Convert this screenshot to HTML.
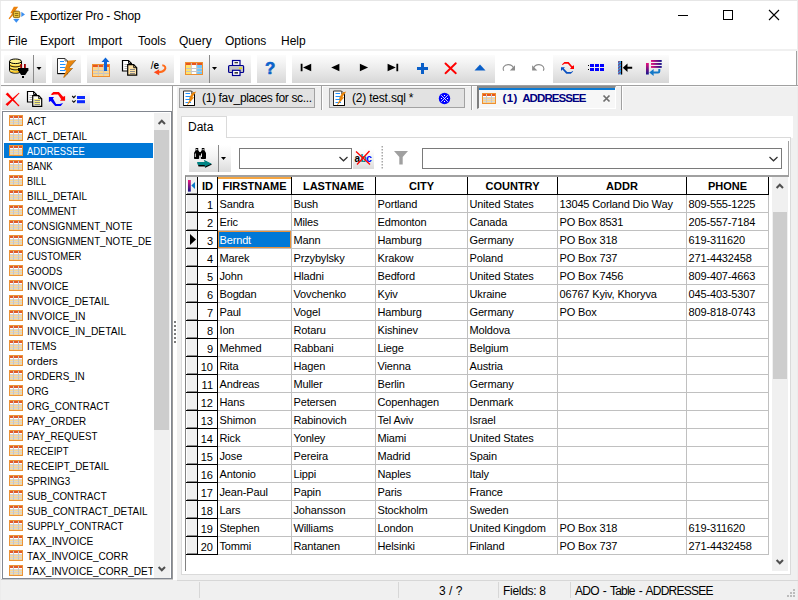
<!DOCTYPE html>
<html lang="en"><head><meta charset="utf-8"><title>Exportizer Pro - Shop</title>
<style>
*{box-sizing:border-box;margin:0;padding:0}
html,body{width:798px;height:600px;overflow:hidden;background:#f0f0f0}
body{position:relative;font-family:"Liberation Sans",sans-serif;font-size:12px;color:#000}
.a{position:absolute}
.t{position:absolute;white-space:nowrap;line-height:16px;height:16px}
.seg{font-size:12px}
.tah{font-size:11px}
.sx{display:inline-block;transform-origin:0 50%}
.grp{position:absolute;top:55px;height:28px;background:linear-gradient(#fcfcfc 0%,#f4f4f4 25%,#e9e9e9 55%,#d7d7d7 100%)}
.vsep{position:absolute;width:1px;background:#8a8a8a}
svg{position:absolute;overflow:visible}
.li{position:absolute;left:4px;width:149px;height:15px;overflow:hidden}
.li .tx{position:absolute;left:23px;top:1px;line-height:15px;font-size:11px;white-space:nowrap;transform-origin:0 50%}
.hl{background:#0078d7;color:#fff}
.cell{position:absolute;height:17px;padding-top:1px;line-height:17px;font-size:11px;letter-spacing:-.15px;white-space:nowrap;overflow:hidden}
.hd{font-weight:bold;text-align:center;letter-spacing:0}
</style></head>
<body>
<div class="a" style="left:0;top:0;width:798px;height:85px;background:#fff"></div>
<div class="a" style="left:0;top:0;width:1px;height:600px;background:#ececec"></div>
<div class="a" style="left:0;top:0;width:798px;height:1px;background:#e6e6e6"></div>
<div class="a" style="left:797px;top:0;width:1px;height:600px;background:#ececec"></div>
<div class="a" style="left:796px;top:51px;width:1px;height:35px;background:#a0a0a0"></div>
<div class="a" style="left:1px;top:49px;width:797px;height:2px;background:#f0f0f0"></div>
<div class="a" style="left:1px;top:85px;width:797px;height:1px;background:#a0a0a0"></div>
<div class="a" style="left:1px;top:86px;width:797px;height:1px;background:#fafafa"></div>
<svg style="left:0;top:0" width="32" height="31" viewBox="0 0 32 31">
<path d="M13.800 6.800 L18.200 6.800 L15.300 10.800 L17 10.800 L9.500 19.200 L8.600 18.500 L12.300 13.300 L10.300 13.300Z" fill="#ec820c"/>
<rect x="13.300" y="11.200" width="6.500" height="6.500" rx="1.500" fill="#e8c23c" stroke="#8a6410" stroke-width="1"/>
<path d="M14.800 13.500h3.500M14.800 15.500h3.500" stroke="#7a5a10" stroke-width=".8"/>
<path d="M21.300 11.800 L25 14.400 L21.300 17Z" fill="#3a8ef0"/>
<path d="M13.200 19 L16.300 22.800 L19.400 19Z" fill="#3a8ef0"/>
</svg>
<div class="t" style="left:30px;top:8px;font-size:12px;letter-spacing:-.2px">Exportizer Pro - Shop</div>
<svg style="left:660px;top:0" width="138" height="31" viewBox="0 0 138 31">
<path d="M18 15.500h10" stroke="#000" stroke-width="1"/>
<rect x="63.5" y="10.5" width="9" height="9" fill="none" stroke="#000" stroke-width="1"/>
<path d="M109 10 L119 20 M119 10 L109 20" stroke="#000" stroke-width="1.100"/>
</svg>
<div class="t seg" style="left:8px;top:33px">File</div>
<div class="t seg" style="left:40px;top:33px">Export</div>
<div class="t seg" style="left:88px;top:33px">Import</div>
<div class="t seg" style="left:138px;top:33px">Tools</div>
<div class="t seg" style="left:179px;top:33px">Query</div>
<div class="t seg" style="left:225px;top:33px">Options</div>
<div class="t seg" style="left:281px;top:33px">Help</div>
<div class="grp" style="left:4px;width:42px"></div>
<div class="grp" style="left:52px;width:29px"></div>
<div class="grp" style="left:87px;width:87px"></div>
<div class="grp" style="left:180px;width:71px"></div>
<div class="grp" style="left:257px;width:29px"></div>
<div class="grp" style="left:292px;width:203px"></div>
<div class="grp" style="left:553px;width:116px"></div>
<div class="vsep" style="left:33px;top:55px;height:28px"></div>
<div class="vsep" style="left:209px;top:55px;height:28px"></div>
<svg style="left:0;top:0" width="798" height="600" viewBox="0 0 798 600"><g>
<path d="M9.500 61.500v9c0 1.700 2.700 2.700 6 2.700s6-1 6-2.700v-9z" fill="#fff27a" stroke="#000" stroke-width="1"/>
<path d="M10.300 65.300c1.500 1.300 4 1.600 6.500 1.400l3-.6v-1.200c-2 1.200-7 1.300-9.500-.3zM10.300 68.300c1.500 1.300 4 1.600 6.500 1.400l3-.6v-1.200c-2 1.200-7 1.300-9.500-.3zM10.300 71c1.500 1.300 4 1.600 6.500 1.400l3-.6v-1.200c-2 1.200-7 1.300-9.500-.3z" fill="#ffb400"/>
<ellipse cx="15.500" cy="61.300" rx="6" ry="2.300" fill="#fff48c" stroke="#000" stroke-width="1"/>
<path d="M9.500 64.300c0 1.700 2.700 2.600 6 2.600s6-.9 6-2.600M9.500 67.300c0 1.700 2.700 2.600 6 2.600s6-.9 6-2.600" fill="none" stroke="#000" stroke-width="1"/>
<rect x="20.300" y="64" width="1.800" height="4.500" fill="#a00000"/><rect x="24" y="64" width="1.800" height="4.500" fill="#a00000"/>
<path d="M18 68h10.400v2.200l-3.200 4.800h-4l-3.200-4.800z" fill="#000"/>
<rect x="22" y="76" width="2" height="2" fill="#000"/>
</g><path d="M36.5 67h5l-2.5 3z" fill="#000"/><g transform="translate(57 58) scale(1.0)">
<path d="M.5 .5h7.500l2.500 2.500v12.500h-10z" fill="#fff" stroke="#303030" stroke-width="1"/>
<path d="M.3 15.700h10.400" stroke="#000" stroke-width="1"/>
<path d="M8 .5v2.500h2.500" fill="none" stroke="#505050" stroke-width=".8"/>
<path d="M3 3.500h4M3 6.500h5.500M3 9.500h5.500M3 12.500h5.500" stroke="#1e90ff" stroke-width="1.100"/>
<path d="M10.800 2.700 L19 2 L12 10 L15.800 10 L6.800 19.800 L6.300 19 L9.300 12 L7.300 12Z" fill="#e8850c"/>
<path d="M19 2 L12 10 M15.800 10 L6.800 19.800" stroke="#5a3a10" stroke-width=".5" fill="none"/>
</g><rect x="92.5" y="64.5" width="17" height="12" fill="#fbd690" stroke="#ee8f30"/><rect x="93" y="65" width="16" height="2" fill="#e8551c"/><path d="M93 70.50h16" stroke="#c4c4c4" stroke-width="1"/><path d="M93 73.50h16" stroke="#c4c4c4" stroke-width="1"/><path d="M98.33 65v11" stroke="#c8c8c8" stroke-width="1"/><path d="M103.67 65v11" stroke="#c8c8c8" stroke-width="1"/><path d="M105.500 57.500 L109.500 62 L107 62 L107 71 L104 71 L104 62 L101.500 62Z" fill="#0a64d8"/><g>
<path d="M122.500 60.500h6l3 3v7.500h-9z" fill="#fff" stroke="#000" stroke-width="1.200"/>
<path d="M128.500 60.500v3h3" fill="none" stroke="#000" stroke-width=".9"/>
<path d="M124.500 64.500h4M124.500 66.500h3M124.500 68.500h3" stroke="#a0a0a0" stroke-width=".8"/>
<path d="M127.700 64.700h6l3 3v7.500h-9z" fill="#ffe2a6" stroke="#000" stroke-width="1.200"/>
<path d="M133.700 64.700v3h3" fill="none" stroke="#000" stroke-width=".9"/>
<path d="M130 69.500h5M130 71.500h5M130 73.500h5" stroke="#8a8a8a" stroke-width="1"/>
</g><text x="150.800" y="68.800" font-family="Liberation Sans, sans-serif" font-size="10" fill="#000">/<tspan font-weight="bold">e</tspan></text><path d="M162.300 65.200c3 .2 3.700 2.700 2.500 4.400-1.200 1.700-3.500 2.500-6.300 2.600" fill="none" stroke="#ff6a1a" stroke-width="2"/><path d="M153.800 72.300 L159.200 69.300 L159.200 75.300Z" fill="#ff4a1a"/><rect x="185.5" y="62.5" width="17" height="12" fill="#fbd690" stroke="#ee8f30"/><rect x="186.00" y="65" width="5.33" height="9" fill="#ffe36a"/><rect x="191.33" y="65" width="5.33" height="9" fill="#ffffff"/><rect x="196.67" y="65" width="5.33" height="9" fill="#6cc6ff"/><rect x="186" y="63" width="16" height="2" fill="#e8551c"/><path d="M186 68.50h16" stroke="#c4c4c4" stroke-width="1"/><path d="M186 71.50h16" stroke="#c4c4c4" stroke-width="1"/><path d="M191.33 63v11" stroke="#c8c8c8" stroke-width="1"/><path d="M196.67 63v11" stroke="#c8c8c8" stroke-width="1"/><path d="M212 67h5l-2.5 3z" fill="#000"/><g>
<rect x="232.500" y="60.500" width="7.500" height="5" fill="#fff" stroke="#000090" stroke-width="1.200"/>
<rect x="228.600" y="65.500" width="15" height="7" rx="1" fill="#c4c4c4" stroke="#000090" stroke-width="1.200"/>
<rect x="232.500" y="70.300" width="7.500" height="5.200" fill="#fff" stroke="#000090" stroke-width="1.200"/>
<path d="M234.500 62.700h3.500M234.500 72.900h3.500" stroke="#000" stroke-width="1.100"/>
<rect x="239" y="67.600" width="3" height="1.300" fill="#f0e000"/>
</g><text x="265.700" y="74.300" font-family="Liberation Sans, sans-serif" font-size="16.500" font-weight="bold" fill="#9aa0a8">?</text><text x="265" y="73.600" font-family="Liberation Sans, sans-serif" font-size="16.500" font-weight="bold" fill="#0a64d0" stroke="#0a64d0" stroke-width=".5">?</text><path d="M300.700 63.800h1.800v7.400h-1.800zM311.200 63.700v7.600l-8.200-3.800z" fill="#000"/><path d="M339.400 63.700v7.600l-8.200-3.800z" fill="#000"/><path d="M359.900 63.700v7.600l8.200-3.800z" fill="#000"/><path d="M387.600 63.700v7.600l8.200-3.800zM396.400 63.800h1.800v7.400h-1.800z" fill="#000"/><path d="M421 63h3v4h4v3h-4v4h-3v-4h-4v-3h4z" fill="#0a5fc8"/><path d="M445.500 63.500 L455.800 73.200 M455.800 63.300 L445.500 73.200" stroke="#ff0000" stroke-width="1.900" stroke-linecap="round"/><path d="M474.500 70.500 L480 64.600 L485.500 70.500Z" fill="#0a5fc8"/><g fill="none" stroke="#8c8c8c" stroke-width="1.100">
<path d="M503.800 70.800c-1.600-2.800 .2-6 4.200-6.200 3-.1 4.800 1.400 5.600 3.500"/>
<path d="M543.300 70.800c1.600-2.800-.2-6-4.200-6.200-3-.1-4.800 1.400-5.600 3.500"/></g>
<path d="M515 65.300v5.200h-5.200z" fill="#8c8c8c"/><path d="M532.100 65.300v5.200h5.200z" fill="#8c8c8c"/><polygon points="561.9,64.5 564.4,61.9 568.6,61.9 572.2,66.3 574.0,65.2 574.0,68.9 570.0,68.9 571.2,67.5 567.9,63.8 564.5,63.8 562.6,64.9" fill="#ff0000"/><polygon points="561.0,67.2 564.9,67.2 563.8,68.4 567.2,72.1 571.2,72.1 572.6,70.9 573.1,71.6 570.8,73.8 566.3,73.8 562.4,69.6 561.0,70.9" fill="#0a50c0"/><rect x="588" y="65" width="1" height="1" fill="#000"/><rect x="588" y="69" width="1" height="1" fill="#000"/><rect x="590" y="64" width="4" height="3" fill="#0000ff"/><rect x="595" y="64" width="4" height="3" fill="#0000ff"/><rect x="600" y="64" width="4" height="3" fill="#0000ff"/><rect x="590" y="68" width="4" height="3" fill="#0000ff"/><rect x="595" y="68" width="4" height="3" fill="#0000ff"/><rect x="600" y="68" width="4" height="3" fill="#0000ff"/><defs><pattern id="hat" width="3" height="3" patternUnits="userSpaceOnUse"><rect width="3" height="3" fill="#29a0f0"/><path d="M-1 3.500 L3.500 -1 M-1 1 L1 -1 M2 4 L4 2" stroke="#c01030" stroke-width="1"/></pattern>
<linearGradient id="mg" x1="0" y1="0" x2="0" y2="1"><stop offset="0" stop-color="#e8107c"/><stop offset="1" stop-color="#14148c"/></linearGradient>
<linearGradient id="mh" x1="0" y1="0" x2="1" y2="0"><stop offset="0" stop-color="#e8107c"/><stop offset="1" stop-color="#14148c"/></linearGradient></defs>
<rect x="618" y="61" width="3.500" height="13.500" fill="url(#hat)"/><rect x="621" y="61" width="1.200" height="13.500" fill="#000"/>
<path d="M622.800 67.700 L627.500 63.500 L627.500 66.800 L632.200 66.800 L632.200 68.700 L627.500 68.700 L627.500 72Z" fill="#000"/><rect x="646" y="63" width="2.800" height="11.500" fill="url(#mg)"/>
<rect x="651" y="60" width="10.700" height="1.900" fill="url(#mh)"/><rect x="651" y="63" width="10.700" height="1.900" fill="url(#mh)"/><rect x="651" y="66" width="10.700" height="1.900" fill="url(#mh)"/>
<path d="M659.300 69v2.300c0 .8-.5 1.200-1.200 1.200h-5" fill="none" stroke="#1478c8" stroke-width="2"/>
<path d="M649.300 72.500 L653.600 69 L653.600 76Z" fill="#1478c8"/></svg>
<div class="a" style="left:1px;top:87px;width:176px;height:493px;background:#fff"></div>
<div class="a" style="left:2px;top:88px;width:88px;height:22px;background:linear-gradient(#ffffff 0%,#f3f3f3 45%,#dcdcdc 100%)"></div>
<div class="a" style="left:172px;top:86px;width:1px;height:493px;background:#9a9a9a"></div>
<svg style="left:0;top:0" width="798" height="600" viewBox="0 0 798 600"><polygon points="5.600,94.300 7.700,92.600 18.900,105.300 18.300,106" fill="#ff0000"/><polygon points="18.900,92.700 19.500,93.300 7.500,106.100 5.500,104.300" fill="#ff0000"/><rect x="17.800" y="104.800" width="1.400" height="1.400" fill="#ff0000"/><g>
<path d="M27.500 91.500h6l3 3v7.500h-9z" fill="#fff" stroke="#000" stroke-width="1.200"/>
<path d="M33.500 91.500v3h3" fill="none" stroke="#000" stroke-width=".9"/>
<path d="M29.500 95.500h4M29.500 97.500h3M29.500 99.500h3" stroke="#a0a0a0" stroke-width=".8"/>
<path d="M32.700 95.700h6l3 3v7.700h-9z" fill="#fffef0" stroke="#000" stroke-width="1.200"/>
<path d="M38.700 95.700v3h3" fill="none" stroke="#000" stroke-width=".9"/>
<path d="M34.500 100.500h5.500M34.500 102.500h5.500M34.500 104.500h5.500" stroke="#8a8a8a" stroke-width="1"/>
<path d="M34.500 99.500h5.500M34.500 101.500h5.500M34.500 103.500h5.500" stroke="#f4e400" stroke-width="1" stroke-dasharray="1 1"/>
</g><polygon points="50.8,94.5 53.3,92.0 58.9,92.0 63.1,96.8 65.1,95.9 65.1,100.8 60.0,100.8 61.2,99.2 58.0,94.5 54.2,94.5 52.4,94.9" fill="#ff0000"/><polygon points="48.9,96.9 54.0,96.9 52.9,98.5 56.1,104.0 59.8,104.0 63.1,103.1 60.8,106.1 55.2,106.1 50.8,101.0 48.9,102.0" fill="#0000ff"/><path d="M72.200 96 l1.600 1.600 l1.800 -2 M72.200 100.700 l1.600 1.600 l1.800 -2" fill="none" stroke="#000" stroke-width="1.100"/><rect x="77" y="96" width="8" height="3" fill="#0a28ff"/><rect x="77" y="100.200" width="8" height="3" fill="#0a28ff"/></svg>
<div class="a" style="left:2px;top:111px;width:170px;height:468px;border:1px solid #828790;background:#fff"></div>
<div class="li" style="top:113px"><svg style="left:5px;top:2px" width="14" height="11" viewBox="0 0 14 11"><rect x=".5" y=".5" width="13" height="10" fill="#fbd690" stroke="#ea9438"/><rect x="1" y="1" width="12" height="2" fill="#e2592a"/><rect x="1" y="3" width="12" height="1" fill="#fff"/><path d="M1 4.500h12M1 6.500h12M1 8.500h12" stroke="#d6d6d6" stroke-width="1"/><path d="M4.500 1v9M9.500 1v9" stroke="#c6c6c6" stroke-width="1"/></svg><span class="tx" style="transform:scaleX(0.873)">ACT</span></div>
<div class="li" style="top:128px"><svg style="left:5px;top:2px" width="14" height="11" viewBox="0 0 14 11"><rect x=".5" y=".5" width="13" height="10" fill="#fbd690" stroke="#ea9438"/><rect x="1" y="1" width="12" height="2" fill="#e2592a"/><rect x="1" y="3" width="12" height="1" fill="#fff"/><path d="M1 4.500h12M1 6.500h12M1 8.500h12" stroke="#d6d6d6" stroke-width="1"/><path d="M4.500 1v9M9.500 1v9" stroke="#c6c6c6" stroke-width="1"/></svg><span class="tx" style="transform:scaleX(0.912)">ACT_DETAIL</span></div>
<div class="li hl" style="top:143px"><svg style="left:5px;top:2px" width="14" height="11" viewBox="0 0 14 11"><rect x=".5" y=".5" width="13" height="10" fill="#fbd690" stroke="#ea9438"/><rect x="1" y="1" width="12" height="2" fill="#e2592a"/><rect x="1" y="3" width="12" height="1" fill="#fff"/><path d="M1 4.500h12M1 6.500h12M1 8.500h12" stroke="#d6d6d6" stroke-width="1"/><path d="M4.500 1v9M9.500 1v9" stroke="#c6c6c6" stroke-width="1"/></svg><span class="tx" style="transform:scaleX(0.849)">ADDRESSEE</span></div>
<div class="li" style="top:158px"><svg style="left:5px;top:2px" width="14" height="11" viewBox="0 0 14 11"><rect x=".5" y=".5" width="13" height="10" fill="#fbd690" stroke="#ea9438"/><rect x="1" y="1" width="12" height="2" fill="#e2592a"/><rect x="1" y="3" width="12" height="1" fill="#fff"/><path d="M1 4.500h12M1 6.500h12M1 8.500h12" stroke="#d6d6d6" stroke-width="1"/><path d="M4.500 1v9M9.500 1v9" stroke="#c6c6c6" stroke-width="1"/></svg><span class="tx" style="transform:scaleX(0.854)">BANK</span></div>
<div class="li" style="top:173px"><svg style="left:5px;top:2px" width="14" height="11" viewBox="0 0 14 11"><rect x=".5" y=".5" width="13" height="10" fill="#fbd690" stroke="#ea9438"/><rect x="1" y="1" width="12" height="2" fill="#e2592a"/><rect x="1" y="3" width="12" height="1" fill="#fff"/><path d="M1 4.500h12M1 6.500h12M1 8.500h12" stroke="#d6d6d6" stroke-width="1"/><path d="M4.500 1v9M9.500 1v9" stroke="#c6c6c6" stroke-width="1"/></svg><span class="tx" style="transform:scaleX(0.848)">BILL</span></div>
<div class="li" style="top:188px"><svg style="left:5px;top:2px" width="14" height="11" viewBox="0 0 14 11"><rect x=".5" y=".5" width="13" height="10" fill="#fbd690" stroke="#ea9438"/><rect x="1" y="1" width="12" height="2" fill="#e2592a"/><rect x="1" y="3" width="12" height="1" fill="#fff"/><path d="M1 4.500h12M1 6.500h12M1 8.500h12" stroke="#d6d6d6" stroke-width="1"/><path d="M4.500 1v9M9.500 1v9" stroke="#c6c6c6" stroke-width="1"/></svg><span class="tx" style="transform:scaleX(0.903)">BILL_DETAIL</span></div>
<div class="li" style="top:203px"><svg style="left:5px;top:2px" width="14" height="11" viewBox="0 0 14 11"><rect x=".5" y=".5" width="13" height="10" fill="#fbd690" stroke="#ea9438"/><rect x="1" y="1" width="12" height="2" fill="#e2592a"/><rect x="1" y="3" width="12" height="1" fill="#fff"/><path d="M1 4.500h12M1 6.500h12M1 8.500h12" stroke="#d6d6d6" stroke-width="1"/><path d="M4.500 1v9M9.500 1v9" stroke="#c6c6c6" stroke-width="1"/></svg><span class="tx" style="transform:scaleX(0.873)">COMMENT</span></div>
<div class="li" style="top:218px"><svg style="left:5px;top:2px" width="14" height="11" viewBox="0 0 14 11"><rect x=".5" y=".5" width="13" height="10" fill="#fbd690" stroke="#ea9438"/><rect x="1" y="1" width="12" height="2" fill="#e2592a"/><rect x="1" y="3" width="12" height="1" fill="#fff"/><path d="M1 4.500h12M1 6.500h12M1 8.500h12" stroke="#d6d6d6" stroke-width="1"/><path d="M4.500 1v9M9.500 1v9" stroke="#c6c6c6" stroke-width="1"/></svg><span class="tx" style="transform:scaleX(0.886)">CONSIGNMENT_NOTE</span></div>
<div class="li" style="top:233px"><svg style="left:5px;top:2px" width="14" height="11" viewBox="0 0 14 11"><rect x=".5" y=".5" width="13" height="10" fill="#fbd690" stroke="#ea9438"/><rect x="1" y="1" width="12" height="2" fill="#e2592a"/><rect x="1" y="3" width="12" height="1" fill="#fff"/><path d="M1 4.500h12M1 6.500h12M1 8.500h12" stroke="#d6d6d6" stroke-width="1"/><path d="M4.500 1v9M9.500 1v9" stroke="#c6c6c6" stroke-width="1"/></svg><span class="tx" style="transform:scaleX(0.886)">CONSIGNMENT_NOTE_DE</span></div>
<div class="li" style="top:248px"><svg style="left:5px;top:2px" width="14" height="11" viewBox="0 0 14 11"><rect x=".5" y=".5" width="13" height="10" fill="#fbd690" stroke="#ea9438"/><rect x="1" y="1" width="12" height="2" fill="#e2592a"/><rect x="1" y="3" width="12" height="1" fill="#fff"/><path d="M1 4.500h12M1 6.500h12M1 8.500h12" stroke="#d6d6d6" stroke-width="1"/><path d="M4.500 1v9M9.500 1v9" stroke="#c6c6c6" stroke-width="1"/></svg><span class="tx" style="transform:scaleX(0.867)">CUSTOMER</span></div>
<div class="li" style="top:263px"><svg style="left:5px;top:2px" width="14" height="11" viewBox="0 0 14 11"><rect x=".5" y=".5" width="13" height="10" fill="#fbd690" stroke="#ea9438"/><rect x="1" y="1" width="12" height="2" fill="#e2592a"/><rect x="1" y="3" width="12" height="1" fill="#fff"/><path d="M1 4.500h12M1 6.500h12M1 8.500h12" stroke="#d6d6d6" stroke-width="1"/><path d="M4.500 1v9M9.500 1v9" stroke="#c6c6c6" stroke-width="1"/></svg><span class="tx" style="transform:scaleX(0.86)">GOODS</span></div>
<div class="li" style="top:278px"><svg style="left:5px;top:2px" width="14" height="11" viewBox="0 0 14 11"><rect x=".5" y=".5" width="13" height="10" fill="#fbd690" stroke="#ea9438"/><rect x="1" y="1" width="12" height="2" fill="#e2592a"/><rect x="1" y="3" width="12" height="1" fill="#fff"/><path d="M1 4.500h12M1 6.500h12M1 8.500h12" stroke="#d6d6d6" stroke-width="1"/><path d="M4.500 1v9M9.500 1v9" stroke="#c6c6c6" stroke-width="1"/></svg><span class="tx" style="transform:scaleX(0.92)">INVOICE</span></div>
<div class="li" style="top:293px"><svg style="left:5px;top:2px" width="14" height="11" viewBox="0 0 14 11"><rect x=".5" y=".5" width="13" height="10" fill="#fbd690" stroke="#ea9438"/><rect x="1" y="1" width="12" height="2" fill="#e2592a"/><rect x="1" y="3" width="12" height="1" fill="#fff"/><path d="M1 4.500h12M1 6.500h12M1 8.500h12" stroke="#d6d6d6" stroke-width="1"/><path d="M4.500 1v9M9.500 1v9" stroke="#c6c6c6" stroke-width="1"/></svg><span class="tx" style="transform:scaleX(0.925)">INVOICE_DETAIL</span></div>
<div class="li" style="top:308px"><svg style="left:5px;top:2px" width="14" height="11" viewBox="0 0 14 11"><rect x=".5" y=".5" width="13" height="10" fill="#fbd690" stroke="#ea9438"/><rect x="1" y="1" width="12" height="2" fill="#e2592a"/><rect x="1" y="3" width="12" height="1" fill="#fff"/><path d="M1 4.500h12M1 6.500h12M1 8.500h12" stroke="#d6d6d6" stroke-width="1"/><path d="M4.500 1v9M9.500 1v9" stroke="#c6c6c6" stroke-width="1"/></svg><span class="tx" style="transform:scaleX(0.937)">INVOICE_IN</span></div>
<div class="li" style="top:323px"><svg style="left:5px;top:2px" width="14" height="11" viewBox="0 0 14 11"><rect x=".5" y=".5" width="13" height="10" fill="#fbd690" stroke="#ea9438"/><rect x="1" y="1" width="12" height="2" fill="#e2592a"/><rect x="1" y="3" width="12" height="1" fill="#fff"/><path d="M1 4.500h12M1 6.500h12M1 8.500h12" stroke="#d6d6d6" stroke-width="1"/><path d="M4.500 1v9M9.500 1v9" stroke="#c6c6c6" stroke-width="1"/></svg><span class="tx" style="transform:scaleX(0.934)">INVOICE_IN_DETAIL</span></div>
<div class="li" style="top:338px"><svg style="left:5px;top:2px" width="14" height="11" viewBox="0 0 14 11"><rect x=".5" y=".5" width="13" height="10" fill="#fbd690" stroke="#ea9438"/><rect x="1" y="1" width="12" height="2" fill="#e2592a"/><rect x="1" y="3" width="12" height="1" fill="#fff"/><path d="M1 4.500h12M1 6.500h12M1 8.500h12" stroke="#d6d6d6" stroke-width="1"/><path d="M4.500 1v9M9.500 1v9" stroke="#c6c6c6" stroke-width="1"/></svg><span class="tx" style="transform:scaleX(0.88)">ITEMS</span></div>
<div class="li" style="top:353px"><svg style="left:5px;top:2px" width="14" height="11" viewBox="0 0 14 11"><rect x=".5" y=".5" width="13" height="10" fill="#fbd690" stroke="#ea9438"/><rect x="1" y="1" width="12" height="2" fill="#e2592a"/><rect x="1" y="3" width="12" height="1" fill="#fff"/><path d="M1 4.500h12M1 6.500h12M1 8.500h12" stroke="#d6d6d6" stroke-width="1"/><path d="M4.500 1v9M9.500 1v9" stroke="#c6c6c6" stroke-width="1"/></svg><span class="tx" style="transform:scaleX(0.988)">orders</span></div>
<div class="li" style="top:368px"><svg style="left:5px;top:2px" width="14" height="11" viewBox="0 0 14 11"><rect x=".5" y=".5" width="13" height="10" fill="#fbd690" stroke="#ea9438"/><rect x="1" y="1" width="12" height="2" fill="#e2592a"/><rect x="1" y="3" width="12" height="1" fill="#fff"/><path d="M1 4.500h12M1 6.500h12M1 8.500h12" stroke="#d6d6d6" stroke-width="1"/><path d="M4.500 1v9M9.500 1v9" stroke="#c6c6c6" stroke-width="1"/></svg><span class="tx" style="transform:scaleX(0.897)">ORDERS_IN</span></div>
<div class="li" style="top:383px"><svg style="left:5px;top:2px" width="14" height="11" viewBox="0 0 14 11"><rect x=".5" y=".5" width="13" height="10" fill="#fbd690" stroke="#ea9438"/><rect x="1" y="1" width="12" height="2" fill="#e2592a"/><rect x="1" y="3" width="12" height="1" fill="#fff"/><path d="M1 4.500h12M1 6.500h12M1 8.500h12" stroke="#d6d6d6" stroke-width="1"/><path d="M4.500 1v9M9.500 1v9" stroke="#c6c6c6" stroke-width="1"/></svg><span class="tx" style="transform:scaleX(0.862)">ORG</span></div>
<div class="li" style="top:398px"><svg style="left:5px;top:2px" width="14" height="11" viewBox="0 0 14 11"><rect x=".5" y=".5" width="13" height="10" fill="#fbd690" stroke="#ea9438"/><rect x="1" y="1" width="12" height="2" fill="#e2592a"/><rect x="1" y="3" width="12" height="1" fill="#fff"/><path d="M1 4.500h12M1 6.500h12M1 8.500h12" stroke="#d6d6d6" stroke-width="1"/><path d="M4.500 1v9M9.500 1v9" stroke="#c6c6c6" stroke-width="1"/></svg><span class="tx" style="transform:scaleX(0.893)">ORG_CONTRACT</span></div>
<div class="li" style="top:413px"><svg style="left:5px;top:2px" width="14" height="11" viewBox="0 0 14 11"><rect x=".5" y=".5" width="13" height="10" fill="#fbd690" stroke="#ea9438"/><rect x="1" y="1" width="12" height="2" fill="#e2592a"/><rect x="1" y="3" width="12" height="1" fill="#fff"/><path d="M1 4.500h12M1 6.500h12M1 8.500h12" stroke="#d6d6d6" stroke-width="1"/><path d="M4.500 1v9M9.500 1v9" stroke="#c6c6c6" stroke-width="1"/></svg><span class="tx" style="transform:scaleX(0.894)">PAY_ORDER</span></div>
<div class="li" style="top:428px"><svg style="left:5px;top:2px" width="14" height="11" viewBox="0 0 14 11"><rect x=".5" y=".5" width="13" height="10" fill="#fbd690" stroke="#ea9438"/><rect x="1" y="1" width="12" height="2" fill="#e2592a"/><rect x="1" y="3" width="12" height="1" fill="#fff"/><path d="M1 4.500h12M1 6.500h12M1 8.500h12" stroke="#d6d6d6" stroke-width="1"/><path d="M4.500 1v9M9.500 1v9" stroke="#c6c6c6" stroke-width="1"/></svg><span class="tx" style="transform:scaleX(0.884)">PAY_REQUEST</span></div>
<div class="li" style="top:443px"><svg style="left:5px;top:2px" width="14" height="11" viewBox="0 0 14 11"><rect x=".5" y=".5" width="13" height="10" fill="#fbd690" stroke="#ea9438"/><rect x="1" y="1" width="12" height="2" fill="#e2592a"/><rect x="1" y="3" width="12" height="1" fill="#fff"/><path d="M1 4.500h12M1 6.500h12M1 8.500h12" stroke="#d6d6d6" stroke-width="1"/><path d="M4.500 1v9M9.500 1v9" stroke="#c6c6c6" stroke-width="1"/></svg><span class="tx" style="transform:scaleX(0.872)">RECEIPT</span></div>
<div class="li" style="top:458px"><svg style="left:5px;top:2px" width="14" height="11" viewBox="0 0 14 11"><rect x=".5" y=".5" width="13" height="10" fill="#fbd690" stroke="#ea9438"/><rect x="1" y="1" width="12" height="2" fill="#e2592a"/><rect x="1" y="3" width="12" height="1" fill="#fff"/><path d="M1 4.500h12M1 6.500h12M1 8.500h12" stroke="#d6d6d6" stroke-width="1"/><path d="M4.500 1v9M9.500 1v9" stroke="#c6c6c6" stroke-width="1"/></svg><span class="tx" style="transform:scaleX(0.896)">RECEIPT_DETAIL</span></div>
<div class="li" style="top:473px"><svg style="left:5px;top:2px" width="14" height="11" viewBox="0 0 14 11"><rect x=".5" y=".5" width="13" height="10" fill="#fbd690" stroke="#ea9438"/><rect x="1" y="1" width="12" height="2" fill="#e2592a"/><rect x="1" y="3" width="12" height="1" fill="#fff"/><path d="M1 4.500h12M1 6.500h12M1 8.500h12" stroke="#d6d6d6" stroke-width="1"/><path d="M4.500 1v9M9.500 1v9" stroke="#c6c6c6" stroke-width="1"/></svg><span class="tx" style="transform:scaleX(0.894)">SPRING3</span></div>
<div class="li" style="top:488px"><svg style="left:5px;top:2px" width="14" height="11" viewBox="0 0 14 11"><rect x=".5" y=".5" width="13" height="10" fill="#fbd690" stroke="#ea9438"/><rect x="1" y="1" width="12" height="2" fill="#e2592a"/><rect x="1" y="3" width="12" height="1" fill="#fff"/><path d="M1 4.500h12M1 6.500h12M1 8.500h12" stroke="#d6d6d6" stroke-width="1"/><path d="M4.500 1v9M9.500 1v9" stroke="#c6c6c6" stroke-width="1"/></svg><span class="tx" style="transform:scaleX(0.886)">SUB_CONTRACT</span></div>
<div class="li" style="top:503px"><svg style="left:5px;top:2px" width="14" height="11" viewBox="0 0 14 11"><rect x=".5" y=".5" width="13" height="10" fill="#fbd690" stroke="#ea9438"/><rect x="1" y="1" width="12" height="2" fill="#e2592a"/><rect x="1" y="3" width="12" height="1" fill="#fff"/><path d="M1 4.500h12M1 6.500h12M1 8.500h12" stroke="#d6d6d6" stroke-width="1"/><path d="M4.500 1v9M9.500 1v9" stroke="#c6c6c6" stroke-width="1"/></svg><span class="tx" style="transform:scaleX(0.901)">SUB_CONTRACT_DETAIL</span></div>
<div class="li" style="top:518px"><svg style="left:5px;top:2px" width="14" height="11" viewBox="0 0 14 11"><rect x=".5" y=".5" width="13" height="10" fill="#fbd690" stroke="#ea9438"/><rect x="1" y="1" width="12" height="2" fill="#e2592a"/><rect x="1" y="3" width="12" height="1" fill="#fff"/><path d="M1 4.500h12M1 6.500h12M1 8.500h12" stroke="#d6d6d6" stroke-width="1"/><path d="M4.500 1v9M9.500 1v9" stroke="#c6c6c6" stroke-width="1"/></svg><span class="tx" style="transform:scaleX(0.878)">SUPPLY_CONTRACT</span></div>
<div class="li" style="top:533px"><svg style="left:5px;top:2px" width="14" height="11" viewBox="0 0 14 11"><rect x=".5" y=".5" width="13" height="10" fill="#fbd690" stroke="#ea9438"/><rect x="1" y="1" width="12" height="2" fill="#e2592a"/><rect x="1" y="3" width="12" height="1" fill="#fff"/><path d="M1 4.500h12M1 6.500h12M1 8.500h12" stroke="#d6d6d6" stroke-width="1"/><path d="M4.500 1v9M9.500 1v9" stroke="#c6c6c6" stroke-width="1"/></svg><span class="tx" style="transform:scaleX(0.923)">TAX_INVOICE</span></div>
<div class="li" style="top:548px"><svg style="left:5px;top:2px" width="14" height="11" viewBox="0 0 14 11"><rect x=".5" y=".5" width="13" height="10" fill="#fbd690" stroke="#ea9438"/><rect x="1" y="1" width="12" height="2" fill="#e2592a"/><rect x="1" y="3" width="12" height="1" fill="#fff"/><path d="M1 4.500h12M1 6.500h12M1 8.500h12" stroke="#d6d6d6" stroke-width="1"/><path d="M4.500 1v9M9.500 1v9" stroke="#c6c6c6" stroke-width="1"/></svg><span class="tx" style="transform:scaleX(0.916)">TAX_INVOICE_CORR</span></div>
<div class="li" style="top:563px"><svg style="left:5px;top:2px" width="14" height="11" viewBox="0 0 14 11"><rect x=".5" y=".5" width="13" height="10" fill="#fbd690" stroke="#ea9438"/><rect x="1" y="1" width="12" height="2" fill="#e2592a"/><rect x="1" y="3" width="12" height="1" fill="#fff"/><path d="M1 4.500h12M1 6.500h12M1 8.500h12" stroke="#d6d6d6" stroke-width="1"/><path d="M4.500 1v9M9.500 1v9" stroke="#c6c6c6" stroke-width="1"/></svg><span class="tx" style="transform:scaleX(0.916)">TAX_INVOICE_CORR_DET</span></div>
<div class="a" style="left:154px;top:113px;width:16px;height:465px;background:#f0f0f0"></div>
<div class="a" style="left:154px;top:130px;width:15px;height:300px;background:#cdcdcd"></div>
<svg style="left:158px;top:118.500px" width="8" height="6" viewBox="0 0 8 6"><path d="M.6 5 L3.800 1.700 L7 5" fill="none" stroke="#505050" stroke-width="2"/></svg>
<svg style="left:158px;top:566px" width="8" height="6" viewBox="0 0 8 6"><path d="M.6 1 L3.800 4.300 L7 1" fill="none" stroke="#505050" stroke-width="2"/></svg>
<div class="a" style="left:174px;top:321px;width:2px;height:22px;background:repeating-linear-gradient(#7c7c7c 0 2px,transparent 2px 4px)"></div>
<div class="a" style="left:179px;top:88px;width:136px;height:20px;background:#e2e2e2;border:1px solid #a2a2a2"></div>
<div class="a" style="left:329px;top:88px;width:136px;height:20px;background:#e2e2e2;border:1px solid #a2a2a2"></div>
<div class="a" style="left:321px;top:86px;width:1px;height:24px;background:#a0a0a0"></div>
<div class="a" style="left:322px;top:86px;width:1px;height:24px;background:#fff"></div>
<div class="a" style="left:471px;top:86px;width:1px;height:24px;background:#a0a0a0"></div>
<div class="a" style="left:472px;top:86px;width:1px;height:24px;background:#fff"></div>
<div class="a" style="left:621px;top:86px;width:1px;height:24px;background:#a0a0a0"></div>
<div class="a" style="left:622px;top:86px;width:1px;height:24px;background:#fff"></div>
<div class="a" style="left:477px;top:86px;width:139px;height:23px;background:#f7f7f7;border-left:2px solid #7e7e7e;border-top:2px solid #8c8c8c;border-right:1px solid #fff;border-bottom:1px solid #fff"></div>
<div class="a" style="left:479px;top:88px;width:136px;height:2px;background:#0c7bd4"></div>
<div class="t seg" style="left:202px;top:90px;letter-spacing:-.35px">(1) fav_places for sc...</div>
<div class="t seg" style="left:352px;top:90px;letter-spacing:-.2px">(2) test.sql *</div>
<div class="t seg" style="left:502.500px;top:90px;font-weight:bold;color:#000080;font-size:11.500px;word-spacing:1.200px"><span style="letter-spacing:.4px">(1)</span> <span style="letter-spacing:-.9px">ADDRESSEE</span></div>
<svg style="left:0;top:0" width="798" height="600" viewBox="0 0 798 600"><g transform="translate(183 90.5)">
<path d="M.5 .5h8l3 3v11.500h-11z" fill="#fff" stroke="#303030" stroke-width="1"/>
<path d="M.3 15h11.400M11.500 3.500v11.500" stroke="#000" stroke-width="1" fill="none"/>
<path d="M8.500 .5v3h3" fill="none" stroke="#505050" stroke-width=".8"/>
<path d="M2.500 3h4.500M2.500 6h5.500M2.500 9h5.500M2.500 12h5.500" stroke="#1e90ff" stroke-width="1.100"/>
<path d="M9.200 2.200 L13.300 1 L9.300 6.700 L11.300 6.700 L4.600 14.600 L4 14.200 L7.200 8.200 L5.800 8.200Z" fill="#e8850c"/>
</g><g transform="translate(333 90.5)">
<path d="M.5 .5h8l3 3v11.500h-11z" fill="#fff" stroke="#303030" stroke-width="1"/>
<path d="M.3 15h11.400M11.500 3.500v11.500" stroke="#000" stroke-width="1" fill="none"/>
<path d="M8.500 .5v3h3" fill="none" stroke="#505050" stroke-width=".8"/>
<path d="M2.500 3h4.500M2.500 6h5.500M2.500 9h5.500M2.500 12h5.500" stroke="#1e90ff" stroke-width="1.100"/>
<path d="M9.200 2.200 L13.300 1 L9.300 6.700 L11.300 6.700 L4.600 14.600 L4 14.200 L7.200 8.200 L5.800 8.200Z" fill="#e8850c"/>
</g><circle cx="444.500" cy="98.500" r="5.700" fill="#0000ff"/>
<path d="M441.200 95.200 L447.800 101.800 M447.800 95.200 L441.200 101.800" stroke="#fff" stroke-width=".8"/>
<rect x="444" y="95" width="1" height="1" fill="#fff"/><rect x="444" y="101" width="1" height="1" fill="#fff"/><rect x="441" y="98" width="1" height="1" fill="#fff"/><rect x="447" y="98" width="1" height="1" fill="#fff"/><rect x="482.5" y="93.5" width="13" height="10" fill="#fbd690" stroke="#ee8f30"/><rect x="483" y="94" width="12" height="2" fill="#e8551c"/><rect x="483" y="96" width="12" height="1" fill="#fff"/><path d="M483 97.50h12" stroke="#d6d6d6" stroke-width="1"/><path d="M483 99.50h12" stroke="#d6d6d6" stroke-width="1"/><path d="M483 101.50h12" stroke="#d6d6d6" stroke-width="1"/><path d="M486.50 94v9" stroke="#c8c8c8" stroke-width="1"/><path d="M491.50 94v9" stroke="#c8c8c8" stroke-width="1"/><path d="M603.500 95.500 L609.500 101.500 M609.500 95.500 L603.500 101.500" stroke="#6e6e6e" stroke-width="1.700"/></svg>
<div class="a" style="left:181px;top:116px;width:612px;height:22px;background:#fff"></div>
<div class="a" style="left:181px;top:137px;width:610px;height:438px;background:#fff;border:1px solid #dadada"></div>
<div class="a" style="left:181px;top:116px;width:46px;height:22px;background:#fff;border:1px solid #dadada;border-bottom:none"></div>
<div class="t seg" style="left:188px;top:119px">Data</div>
<div class="a" style="left:185px;top:141px;width:604px;height:35px;background:#fff;border-right:1px solid #a0a0a0;border-bottom:1px solid #a0a0a0"></div>
<div class="a" style="left:189px;top:145px;width:42px;height:27px;background:linear-gradient(#ffffff 0%,#f3f3f3 45%,#dcdcdc 100%)"></div>
<div class="vsep" style="left:218px;top:145px;height:27px"></div>
<div class="a" style="left:239px;top:148px;width:113px;height:21px;background:#fff;border:1px solid #7a7a7a"></div>
<div class="a" style="left:422px;top:148px;width:360px;height:21px;background:#fff;border:1px solid #7a7a7a"></div>
<div class="a" style="left:353px;top:149px;width:21px;height:20px;background:linear-gradient(#ffffff 0%,#f3f3f3 45%,#dcdcdc 100%)"></div>
<svg style="left:0;top:0" width="798" height="600" viewBox="0 0 798 600"><g fill="#000">
<path d="M195.600 148h2.600v2.200l1 1.200v6.800c0 .6-.3.800-.8.800h-3.600c-.5 0-.8-.3-.8-.8v-5.200l1.600-2.800z"/>
<path d="M201.800 148h2.600l0 2.200 1.600 2.800v5.200c0 .6-.3.800-.8.800h-3.600c-.5 0-.8-.3-.8-.8v-6.800l1-1.200z"/>
<rect x="198.500" y="152" width="3" height="3.500"/>
<rect x="196.300" y="149" width="1" height="1.200" fill="#fff"/><rect x="202.600" y="149" width="1" height="1.200" fill="#fff"/>
<rect x="194.800" y="153.500" width=".9" height="3.500" fill="#fff"/><rect x="201" y="153.500" width=".9" height="3.500" fill="#fff"/>
</g>
<path d="M197.500 163.200 L205.500 163.200 L204.200 160.200 L212 164.500 L204.800 167.900 L205.500 166.400 L198.500 166.400Z" fill="#000"/>
<path d="M197 162 L205 162 L203.700 159.800 L211.700 163.800 L204.200 166.800 L205 165 L198 165Z" fill="#008484"/><path d="M221 157h5l-2.5 3z" fill="#000"/><path d="M339.500 157 L343.500 160.800 L347.500 157" fill="none" stroke="#303030" stroke-width="1.200"/><path d="M769.500 157 L773.500 160.800 L777.500 157" fill="none" stroke="#303030" stroke-width="1.200"/><text x="354.500" y="162" font-family="Liberation Sans, sans-serif" font-size="10" font-weight="bold" fill="#000">a</text><text x="360.500" y="162" font-family="Liberation Sans, sans-serif" font-size="10" font-weight="bold" fill="#008080">b</text><text x="366.300" y="162" font-family="Liberation Sans, sans-serif" font-size="10" font-weight="bold" fill="#0000ff">c</text><path d="M356 151.500 L370 164.500 M369.500 151 L357 164.500" stroke="#ff0000" stroke-width="1.300"/><rect x="381.500" y="146" width="1.500" height="1.500" fill="#a8a8a8"/><rect x="381.500" y="149" width="1.500" height="1.500" fill="#a8a8a8"/><rect x="381.500" y="152" width="1.500" height="1.500" fill="#a8a8a8"/><rect x="381.500" y="155" width="1.500" height="1.500" fill="#a8a8a8"/><rect x="381.500" y="158" width="1.500" height="1.500" fill="#a8a8a8"/><rect x="381.500" y="161" width="1.500" height="1.500" fill="#a8a8a8"/><rect x="381.500" y="164" width="1.500" height="1.500" fill="#a8a8a8"/><rect x="381.500" y="167" width="1.500" height="1.500" fill="#a8a8a8"/><path d="M394 151h14l-5.300 6v7.400h-3.400v-7.400z" fill="#a0a0a0"/></svg>
<div class="a" style="left:185px;top:175px;width:604px;height:396px;background:#fff;border-left:1px solid #828282;border-top:2px solid #a0a0a0"></div>
<div class="a" style="left:218px;top:212px;width:551px;height:1px;background:#c0c0c0"></div>
<div class="a" style="left:218px;top:230px;width:551px;height:1px;background:#c0c0c0"></div>
<div class="a" style="left:218px;top:248px;width:551px;height:1px;background:#c0c0c0"></div>
<div class="a" style="left:218px;top:266px;width:551px;height:1px;background:#c0c0c0"></div>
<div class="a" style="left:218px;top:284px;width:551px;height:1px;background:#c0c0c0"></div>
<div class="a" style="left:218px;top:302px;width:551px;height:1px;background:#c0c0c0"></div>
<div class="a" style="left:218px;top:320px;width:551px;height:1px;background:#c0c0c0"></div>
<div class="a" style="left:218px;top:338px;width:551px;height:1px;background:#c0c0c0"></div>
<div class="a" style="left:218px;top:356px;width:551px;height:1px;background:#c0c0c0"></div>
<div class="a" style="left:218px;top:374px;width:551px;height:1px;background:#c0c0c0"></div>
<div class="a" style="left:218px;top:392px;width:551px;height:1px;background:#c0c0c0"></div>
<div class="a" style="left:218px;top:410px;width:551px;height:1px;background:#c0c0c0"></div>
<div class="a" style="left:218px;top:428px;width:551px;height:1px;background:#c0c0c0"></div>
<div class="a" style="left:218px;top:446px;width:551px;height:1px;background:#c0c0c0"></div>
<div class="a" style="left:218px;top:464px;width:551px;height:1px;background:#c0c0c0"></div>
<div class="a" style="left:218px;top:482px;width:551px;height:1px;background:#c0c0c0"></div>
<div class="a" style="left:218px;top:500px;width:551px;height:1px;background:#c0c0c0"></div>
<div class="a" style="left:218px;top:518px;width:551px;height:1px;background:#c0c0c0"></div>
<div class="a" style="left:218px;top:536px;width:551px;height:1px;background:#c0c0c0"></div>
<div class="a" style="left:218px;top:554px;width:551px;height:1px;background:#c0c0c0"></div>
<div class="a" style="left:291px;top:195px;width:1px;height:360px;background:#c0c0c0"></div>
<div class="a" style="left:375px;top:195px;width:1px;height:360px;background:#c0c0c0"></div>
<div class="a" style="left:467px;top:195px;width:1px;height:360px;background:#c0c0c0"></div>
<div class="a" style="left:557px;top:195px;width:1px;height:360px;background:#c0c0c0"></div>
<div class="a" style="left:686px;top:195px;width:1px;height:360px;background:#c0c0c0"></div>
<div class="a" style="left:768px;top:195px;width:1px;height:360px;background:#c0c0c0"></div>
<div class="a" style="left:186px;top:177px;width:11px;height:377px;background:#f0f0f0"></div>
<div class="a" style="left:197px;top:177px;width:1px;height:378px;background:#000"></div>
<div class="a" style="left:217px;top:177px;width:1px;height:378px;background:#000"></div>
<div class="a" style="left:186px;top:194px;width:583px;height:1px;background:#000"></div>
<div class="a" style="left:291px;top:177px;width:1px;height:18px;background:#000"></div>
<div class="a" style="left:375px;top:177px;width:1px;height:18px;background:#000"></div>
<div class="a" style="left:467px;top:177px;width:1px;height:18px;background:#000"></div>
<div class="a" style="left:557px;top:177px;width:1px;height:18px;background:#000"></div>
<div class="a" style="left:686px;top:177px;width:1px;height:18px;background:#000"></div>
<div class="a" style="left:768px;top:177px;width:1px;height:18px;background:#000"></div>
<div class="a" style="left:186px;top:212px;width:32px;height:1px;background:#000"></div>
<div class="a" style="left:186px;top:230px;width:32px;height:1px;background:#000"></div>
<div class="a" style="left:186px;top:248px;width:32px;height:1px;background:#000"></div>
<div class="a" style="left:186px;top:266px;width:32px;height:1px;background:#000"></div>
<div class="a" style="left:186px;top:284px;width:32px;height:1px;background:#000"></div>
<div class="a" style="left:186px;top:302px;width:32px;height:1px;background:#000"></div>
<div class="a" style="left:186px;top:320px;width:32px;height:1px;background:#000"></div>
<div class="a" style="left:186px;top:338px;width:32px;height:1px;background:#000"></div>
<div class="a" style="left:186px;top:356px;width:32px;height:1px;background:#000"></div>
<div class="a" style="left:186px;top:374px;width:32px;height:1px;background:#000"></div>
<div class="a" style="left:186px;top:392px;width:32px;height:1px;background:#000"></div>
<div class="a" style="left:186px;top:410px;width:32px;height:1px;background:#000"></div>
<div class="a" style="left:186px;top:428px;width:32px;height:1px;background:#000"></div>
<div class="a" style="left:186px;top:446px;width:32px;height:1px;background:#000"></div>
<div class="a" style="left:186px;top:464px;width:32px;height:1px;background:#000"></div>
<div class="a" style="left:186px;top:482px;width:32px;height:1px;background:#000"></div>
<div class="a" style="left:186px;top:500px;width:32px;height:1px;background:#000"></div>
<div class="a" style="left:186px;top:518px;width:32px;height:1px;background:#000"></div>
<div class="a" style="left:186px;top:536px;width:32px;height:1px;background:#000"></div>
<div class="a" style="left:186px;top:554px;width:32px;height:1px;background:#000"></div>
<div class="a" style="left:187px;top:193px;width:10px;height:1px;background:#8a8a8a"></div>
<div class="a" style="left:187px;top:211px;width:10px;height:1px;background:#8a8a8a"></div>
<div class="a" style="left:187px;top:229px;width:10px;height:1px;background:#8a8a8a"></div>
<div class="a" style="left:187px;top:247px;width:10px;height:1px;background:#8a8a8a"></div>
<div class="a" style="left:187px;top:265px;width:10px;height:1px;background:#8a8a8a"></div>
<div class="a" style="left:187px;top:283px;width:10px;height:1px;background:#8a8a8a"></div>
<div class="a" style="left:187px;top:301px;width:10px;height:1px;background:#8a8a8a"></div>
<div class="a" style="left:187px;top:319px;width:10px;height:1px;background:#8a8a8a"></div>
<div class="a" style="left:187px;top:337px;width:10px;height:1px;background:#8a8a8a"></div>
<div class="a" style="left:187px;top:355px;width:10px;height:1px;background:#8a8a8a"></div>
<div class="a" style="left:187px;top:373px;width:10px;height:1px;background:#8a8a8a"></div>
<div class="a" style="left:187px;top:391px;width:10px;height:1px;background:#8a8a8a"></div>
<div class="a" style="left:187px;top:409px;width:10px;height:1px;background:#8a8a8a"></div>
<div class="a" style="left:187px;top:427px;width:10px;height:1px;background:#8a8a8a"></div>
<div class="a" style="left:187px;top:445px;width:10px;height:1px;background:#8a8a8a"></div>
<div class="a" style="left:187px;top:463px;width:10px;height:1px;background:#8a8a8a"></div>
<div class="a" style="left:187px;top:481px;width:10px;height:1px;background:#8a8a8a"></div>
<div class="a" style="left:187px;top:499px;width:10px;height:1px;background:#8a8a8a"></div>
<div class="a" style="left:187px;top:517px;width:10px;height:1px;background:#8a8a8a"></div>
<div class="a" style="left:187px;top:535px;width:10px;height:1px;background:#8a8a8a"></div>
<div class="a" style="left:187px;top:553px;width:10px;height:1px;background:#8a8a8a"></div>
<div class="a" style="left:186px;top:177px;width:1px;height:17px;background:#fff"></div>
<div class="a" style="left:186px;top:195px;width:1px;height:17px;background:#fff"></div>
<div class="a" style="left:186px;top:213px;width:1px;height:17px;background:#fff"></div>
<div class="a" style="left:186px;top:231px;width:1px;height:17px;background:#fff"></div>
<div class="a" style="left:186px;top:249px;width:1px;height:17px;background:#fff"></div>
<div class="a" style="left:186px;top:267px;width:1px;height:17px;background:#fff"></div>
<div class="a" style="left:186px;top:285px;width:1px;height:17px;background:#fff"></div>
<div class="a" style="left:186px;top:303px;width:1px;height:17px;background:#fff"></div>
<div class="a" style="left:186px;top:321px;width:1px;height:17px;background:#fff"></div>
<div class="a" style="left:186px;top:339px;width:1px;height:17px;background:#fff"></div>
<div class="a" style="left:186px;top:357px;width:1px;height:17px;background:#fff"></div>
<div class="a" style="left:186px;top:375px;width:1px;height:17px;background:#fff"></div>
<div class="a" style="left:186px;top:393px;width:1px;height:17px;background:#fff"></div>
<div class="a" style="left:186px;top:411px;width:1px;height:17px;background:#fff"></div>
<div class="a" style="left:186px;top:429px;width:1px;height:17px;background:#fff"></div>
<div class="a" style="left:186px;top:447px;width:1px;height:17px;background:#fff"></div>
<div class="a" style="left:186px;top:465px;width:1px;height:17px;background:#fff"></div>
<div class="a" style="left:186px;top:483px;width:1px;height:17px;background:#fff"></div>
<div class="a" style="left:186px;top:501px;width:1px;height:17px;background:#fff"></div>
<div class="a" style="left:186px;top:519px;width:1px;height:17px;background:#fff"></div>
<div class="a" style="left:186px;top:537px;width:1px;height:17px;background:#fff"></div>
<div class="cell hd" style="left:198px;top:177px;width:19px">ID</div>
<div class="cell hd" style="left:218px;top:177px;width:73px">FIRSTNAME</div>
<div class="cell hd" style="left:292px;top:177px;width:83px">LASTNAME</div>
<div class="cell hd" style="left:376px;top:177px;width:91px">CITY</div>
<div class="cell hd" style="left:468px;top:177px;width:89px">COUNTRY</div>
<div class="cell hd" style="left:558px;top:177px;width:128px">ADDR</div>
<div class="cell hd" style="left:687px;top:177px;width:81px">PHONE</div>
<div class="a" style="left:218px;top:177px;width:73px;height:2px;background:#f5a540"></div>
<div class="cell" style="left:198px;top:195px;width:19px;text-align:right;padding-right:4px;padding-top:2px;letter-spacing:0">1</div>
<div class="cell" style="left:218px;top:195px;width:73px;padding-left:1.5px">Sandra</div>
<div class="cell" style="left:292px;top:195px;width:83px;padding-left:1.5px">Bush</div>
<div class="cell" style="left:376px;top:195px;width:91px;padding-left:1.5px">Portland</div>
<div class="cell" style="left:468px;top:195px;width:89px;padding-left:1.5px">United States</div>
<div class="cell" style="left:558px;top:195px;width:128px;padding-left:1.5px">13045 Corland Dio Way</div>
<div class="cell" style="left:687px;top:195px;width:81px;padding-left:1.5px">809-555-1225</div>
<div class="cell" style="left:198px;top:213px;width:19px;text-align:right;padding-right:4px;padding-top:2px;letter-spacing:0">2</div>
<div class="cell" style="left:218px;top:213px;width:73px;padding-left:1.5px">Eric</div>
<div class="cell" style="left:292px;top:213px;width:83px;padding-left:1.5px">Miles</div>
<div class="cell" style="left:376px;top:213px;width:91px;padding-left:1.5px">Edmonton</div>
<div class="cell" style="left:468px;top:213px;width:89px;padding-left:1.5px">Canada</div>
<div class="cell" style="left:558px;top:213px;width:128px;padding-left:1.5px">PO Box 8531</div>
<div class="cell" style="left:687px;top:213px;width:81px;padding-left:1.5px">205-557-7184</div>
<div class="cell" style="left:198px;top:231px;width:19px;text-align:right;padding-right:4px;padding-top:2px;letter-spacing:0">3</div>
<div class="a" style="left:218px;top:231px;width:73px;height:17px;background:#0078d7;border:1px solid #e8913c"></div>
<div class="cell" style="left:218px;top:231px;width:73px;padding-left:1.5px;color:#fff">Berndt</div>
<div class="cell" style="left:292px;top:231px;width:83px;padding-left:1.5px">Mann</div>
<div class="cell" style="left:376px;top:231px;width:91px;padding-left:1.5px">Hamburg</div>
<div class="cell" style="left:468px;top:231px;width:89px;padding-left:1.5px">Germany</div>
<div class="cell" style="left:558px;top:231px;width:128px;padding-left:1.5px">PO Box 318</div>
<div class="cell" style="left:687px;top:231px;width:81px;padding-left:1.5px">619-311620</div>
<div class="cell" style="left:198px;top:249px;width:19px;text-align:right;padding-right:4px;padding-top:2px;letter-spacing:0">4</div>
<div class="cell" style="left:218px;top:249px;width:73px;padding-left:1.5px">Marek</div>
<div class="cell" style="left:292px;top:249px;width:83px;padding-left:1.5px">Przybylsky</div>
<div class="cell" style="left:376px;top:249px;width:91px;padding-left:1.5px">Krakow</div>
<div class="cell" style="left:468px;top:249px;width:89px;padding-left:1.5px">Poland</div>
<div class="cell" style="left:558px;top:249px;width:128px;padding-left:1.5px">PO Box 737</div>
<div class="cell" style="left:687px;top:249px;width:81px;padding-left:1.5px">271-4432458</div>
<div class="cell" style="left:198px;top:267px;width:19px;text-align:right;padding-right:4px;padding-top:2px;letter-spacing:0">5</div>
<div class="cell" style="left:218px;top:267px;width:73px;padding-left:1.5px">John</div>
<div class="cell" style="left:292px;top:267px;width:83px;padding-left:1.5px">Hladni</div>
<div class="cell" style="left:376px;top:267px;width:91px;padding-left:1.5px">Bedford</div>
<div class="cell" style="left:468px;top:267px;width:89px;padding-left:1.5px">United States</div>
<div class="cell" style="left:558px;top:267px;width:128px;padding-left:1.5px">PO Box 7456</div>
<div class="cell" style="left:687px;top:267px;width:81px;padding-left:1.5px">809-407-4663</div>
<div class="cell" style="left:198px;top:285px;width:19px;text-align:right;padding-right:4px;padding-top:2px;letter-spacing:0">6</div>
<div class="cell" style="left:218px;top:285px;width:73px;padding-left:1.5px">Bogdan</div>
<div class="cell" style="left:292px;top:285px;width:83px;padding-left:1.5px">Vovchenko</div>
<div class="cell" style="left:376px;top:285px;width:91px;padding-left:1.5px">Kyiv</div>
<div class="cell" style="left:468px;top:285px;width:89px;padding-left:1.5px">Ukraine</div>
<div class="cell" style="left:558px;top:285px;width:128px;padding-left:1.5px">06767 Kyiv, Khoryva</div>
<div class="cell" style="left:687px;top:285px;width:81px;padding-left:1.5px">045-403-5307</div>
<div class="cell" style="left:198px;top:303px;width:19px;text-align:right;padding-right:4px;padding-top:2px;letter-spacing:0">7</div>
<div class="cell" style="left:218px;top:303px;width:73px;padding-left:1.5px">Paul</div>
<div class="cell" style="left:292px;top:303px;width:83px;padding-left:1.5px">Vogel</div>
<div class="cell" style="left:376px;top:303px;width:91px;padding-left:1.5px">Hamburg</div>
<div class="cell" style="left:468px;top:303px;width:89px;padding-left:1.5px">Germany</div>
<div class="cell" style="left:558px;top:303px;width:128px;padding-left:1.5px">PO Box</div>
<div class="cell" style="left:687px;top:303px;width:81px;padding-left:1.5px">809-818-0743</div>
<div class="cell" style="left:198px;top:321px;width:19px;text-align:right;padding-right:4px;padding-top:2px;letter-spacing:0">8</div>
<div class="cell" style="left:218px;top:321px;width:73px;padding-left:1.5px">Ion</div>
<div class="cell" style="left:292px;top:321px;width:83px;padding-left:1.5px">Rotaru</div>
<div class="cell" style="left:376px;top:321px;width:91px;padding-left:1.5px">Kishinev</div>
<div class="cell" style="left:468px;top:321px;width:89px;padding-left:1.5px">Moldova</div>
<div class="cell" style="left:198px;top:339px;width:19px;text-align:right;padding-right:4px;padding-top:2px;letter-spacing:0">9</div>
<div class="cell" style="left:218px;top:339px;width:73px;padding-left:1.5px">Mehmed</div>
<div class="cell" style="left:292px;top:339px;width:83px;padding-left:1.5px">Rabbani</div>
<div class="cell" style="left:376px;top:339px;width:91px;padding-left:1.5px">Liege</div>
<div class="cell" style="left:468px;top:339px;width:89px;padding-left:1.5px">Belgium</div>
<div class="cell" style="left:198px;top:357px;width:19px;text-align:right;padding-right:4px;padding-top:2px;letter-spacing:0">10</div>
<div class="cell" style="left:218px;top:357px;width:73px;padding-left:1.5px">Rita</div>
<div class="cell" style="left:292px;top:357px;width:83px;padding-left:1.5px">Hagen</div>
<div class="cell" style="left:376px;top:357px;width:91px;padding-left:1.5px">Vienna</div>
<div class="cell" style="left:468px;top:357px;width:89px;padding-left:1.5px">Austria</div>
<div class="cell" style="left:198px;top:375px;width:19px;text-align:right;padding-right:4px;padding-top:2px;letter-spacing:0">11</div>
<div class="cell" style="left:218px;top:375px;width:73px;padding-left:1.5px">Andreas</div>
<div class="cell" style="left:292px;top:375px;width:83px;padding-left:1.5px">Muller</div>
<div class="cell" style="left:376px;top:375px;width:91px;padding-left:1.5px">Berlin</div>
<div class="cell" style="left:468px;top:375px;width:89px;padding-left:1.5px">Germany</div>
<div class="cell" style="left:198px;top:393px;width:19px;text-align:right;padding-right:4px;padding-top:2px;letter-spacing:0">12</div>
<div class="cell" style="left:218px;top:393px;width:73px;padding-left:1.5px">Hans</div>
<div class="cell" style="left:292px;top:393px;width:83px;padding-left:1.5px">Petersen</div>
<div class="cell" style="left:376px;top:393px;width:91px;padding-left:1.5px">Copenhagen</div>
<div class="cell" style="left:468px;top:393px;width:89px;padding-left:1.5px">Denmark</div>
<div class="cell" style="left:198px;top:411px;width:19px;text-align:right;padding-right:4px;padding-top:2px;letter-spacing:0">13</div>
<div class="cell" style="left:218px;top:411px;width:73px;padding-left:1.5px">Shimon</div>
<div class="cell" style="left:292px;top:411px;width:83px;padding-left:1.5px">Rabinovich</div>
<div class="cell" style="left:376px;top:411px;width:91px;padding-left:1.5px">Tel Aviv</div>
<div class="cell" style="left:468px;top:411px;width:89px;padding-left:1.5px">Israel</div>
<div class="cell" style="left:198px;top:429px;width:19px;text-align:right;padding-right:4px;padding-top:2px;letter-spacing:0">14</div>
<div class="cell" style="left:218px;top:429px;width:73px;padding-left:1.5px">Rick</div>
<div class="cell" style="left:292px;top:429px;width:83px;padding-left:1.5px">Yonley</div>
<div class="cell" style="left:376px;top:429px;width:91px;padding-left:1.5px">Miami</div>
<div class="cell" style="left:468px;top:429px;width:89px;padding-left:1.5px">United States</div>
<div class="cell" style="left:198px;top:447px;width:19px;text-align:right;padding-right:4px;padding-top:2px;letter-spacing:0">15</div>
<div class="cell" style="left:218px;top:447px;width:73px;padding-left:1.5px">Jose</div>
<div class="cell" style="left:292px;top:447px;width:83px;padding-left:1.5px">Pereira</div>
<div class="cell" style="left:376px;top:447px;width:91px;padding-left:1.5px">Madrid</div>
<div class="cell" style="left:468px;top:447px;width:89px;padding-left:1.5px">Spain</div>
<div class="cell" style="left:198px;top:465px;width:19px;text-align:right;padding-right:4px;padding-top:2px;letter-spacing:0">16</div>
<div class="cell" style="left:218px;top:465px;width:73px;padding-left:1.5px">Antonio</div>
<div class="cell" style="left:292px;top:465px;width:83px;padding-left:1.5px">Lippi</div>
<div class="cell" style="left:376px;top:465px;width:91px;padding-left:1.5px">Naples</div>
<div class="cell" style="left:468px;top:465px;width:89px;padding-left:1.5px">Italy</div>
<div class="cell" style="left:198px;top:483px;width:19px;text-align:right;padding-right:4px;padding-top:2px;letter-spacing:0">17</div>
<div class="cell" style="left:218px;top:483px;width:73px;padding-left:1.5px">Jean-Paul</div>
<div class="cell" style="left:292px;top:483px;width:83px;padding-left:1.5px">Papin</div>
<div class="cell" style="left:376px;top:483px;width:91px;padding-left:1.5px">Paris</div>
<div class="cell" style="left:468px;top:483px;width:89px;padding-left:1.5px">France</div>
<div class="cell" style="left:198px;top:501px;width:19px;text-align:right;padding-right:4px;padding-top:2px;letter-spacing:0">18</div>
<div class="cell" style="left:218px;top:501px;width:73px;padding-left:1.5px">Lars</div>
<div class="cell" style="left:292px;top:501px;width:83px;padding-left:1.5px">Johansson</div>
<div class="cell" style="left:376px;top:501px;width:91px;padding-left:1.5px">Stockholm</div>
<div class="cell" style="left:468px;top:501px;width:89px;padding-left:1.5px">Sweden</div>
<div class="cell" style="left:198px;top:519px;width:19px;text-align:right;padding-right:4px;padding-top:2px;letter-spacing:0">19</div>
<div class="cell" style="left:218px;top:519px;width:73px;padding-left:1.5px">Stephen</div>
<div class="cell" style="left:292px;top:519px;width:83px;padding-left:1.5px">Williams</div>
<div class="cell" style="left:376px;top:519px;width:91px;padding-left:1.5px">London</div>
<div class="cell" style="left:468px;top:519px;width:89px;padding-left:1.5px">United Kingdom</div>
<div class="cell" style="left:558px;top:519px;width:128px;padding-left:1.5px">PO Box 318</div>
<div class="cell" style="left:687px;top:519px;width:81px;padding-left:1.5px">619-311620</div>
<div class="cell" style="left:198px;top:537px;width:19px;text-align:right;padding-right:4px;padding-top:2px;letter-spacing:0">20</div>
<div class="cell" style="left:218px;top:537px;width:73px;padding-left:1.5px">Tommi</div>
<div class="cell" style="left:292px;top:537px;width:83px;padding-left:1.5px">Rantanen</div>
<div class="cell" style="left:376px;top:537px;width:91px;padding-left:1.5px">Helsinki</div>
<div class="cell" style="left:468px;top:537px;width:89px;padding-left:1.5px">Finland</div>
<div class="cell" style="left:558px;top:537px;width:128px;padding-left:1.5px">PO Box 737</div>
<div class="cell" style="left:687px;top:537px;width:81px;padding-left:1.5px">271-4432458</div>
<svg style="left:189.500px;top:234px" width="6" height="11" viewBox="0 0 6 11"><path d="M0 0 L6 5.500 L0 11Z" fill="#000"/></svg>
<svg style="left:187px;top:179px" width="10" height="13" viewBox="0 0 10 13"><defs><linearGradient id="gi" x1="0" y1="0" x2="0" y2="1"><stop offset="0" stop-color="#f0187c"/><stop offset="1" stop-color="#10108c"/></linearGradient></defs><rect x="1" y="1" width="2.800" height="11.600" fill="url(#gi)"/><path d="M8 3 L4.300 6.500 L8 10Z" fill="#0a78c8"/></svg>
<div class="a" style="left:772px;top:177px;width:16px;height:394px;background:#f0f0f0"></div>
<div class="a" style="left:773px;top:212px;width:14px;height:167px;background:#cdcdcd"></div>
<svg style="left:776px;top:182.500px" width="8" height="6" viewBox="0 0 8 6"><path d="M.6 5 L3.800 1.700 L7 5" fill="none" stroke="#505050" stroke-width="2"/></svg>
<svg style="left:776px;top:559px" width="8" height="6" viewBox="0 0 8 6"><path d="M.6 1 L3.800 4.300 L7 1" fill="none" stroke="#505050" stroke-width="2"/></svg>
<div class="a" style="left:177px;top:580px;width:621px;height:1px;background:#d7d7d7"></div>
<div class="a" style="left:1px;top:579px;width:172px;height:1px;background:#c9c9c9"></div>
<div class="a" style="left:199px;top:582px;width:1px;height:16px;background:#d7d7d7"></div>
<div class="a" style="left:398px;top:582px;width:1px;height:16px;background:#d7d7d7"></div>
<div class="a" style="left:498px;top:582px;width:1px;height:16px;background:#d7d7d7"></div>
<div class="a" style="left:570px;top:582px;width:1px;height:16px;background:#d7d7d7"></div>
<div class="t seg" style="left:439px;top:583px">3 / ?</div>
<div class="t seg" style="left:503px;top:583px;letter-spacing:-.3px">Fields: 8</div>
<div class="t seg" style="left:575px;top:583px;letter-spacing:-.76px;word-spacing:1.500px">ADO - Table - ADDRESSEE</div>
<svg style="left:785px;top:589px" width="10" height="9" viewBox="0 0 10 9"><rect x="8" y="0" width="2" height="2" fill="#bcbcbc"/><rect x="5" y="3" width="2" height="2" fill="#bcbcbc"/><rect x="8" y="3" width="2" height="2" fill="#bcbcbc"/><rect x="2" y="6" width="2" height="2" fill="#bcbcbc"/><rect x="5" y="6" width="2" height="2" fill="#bcbcbc"/><rect x="8" y="6" width="2" height="2" fill="#bcbcbc"/></svg>
</body></html>
